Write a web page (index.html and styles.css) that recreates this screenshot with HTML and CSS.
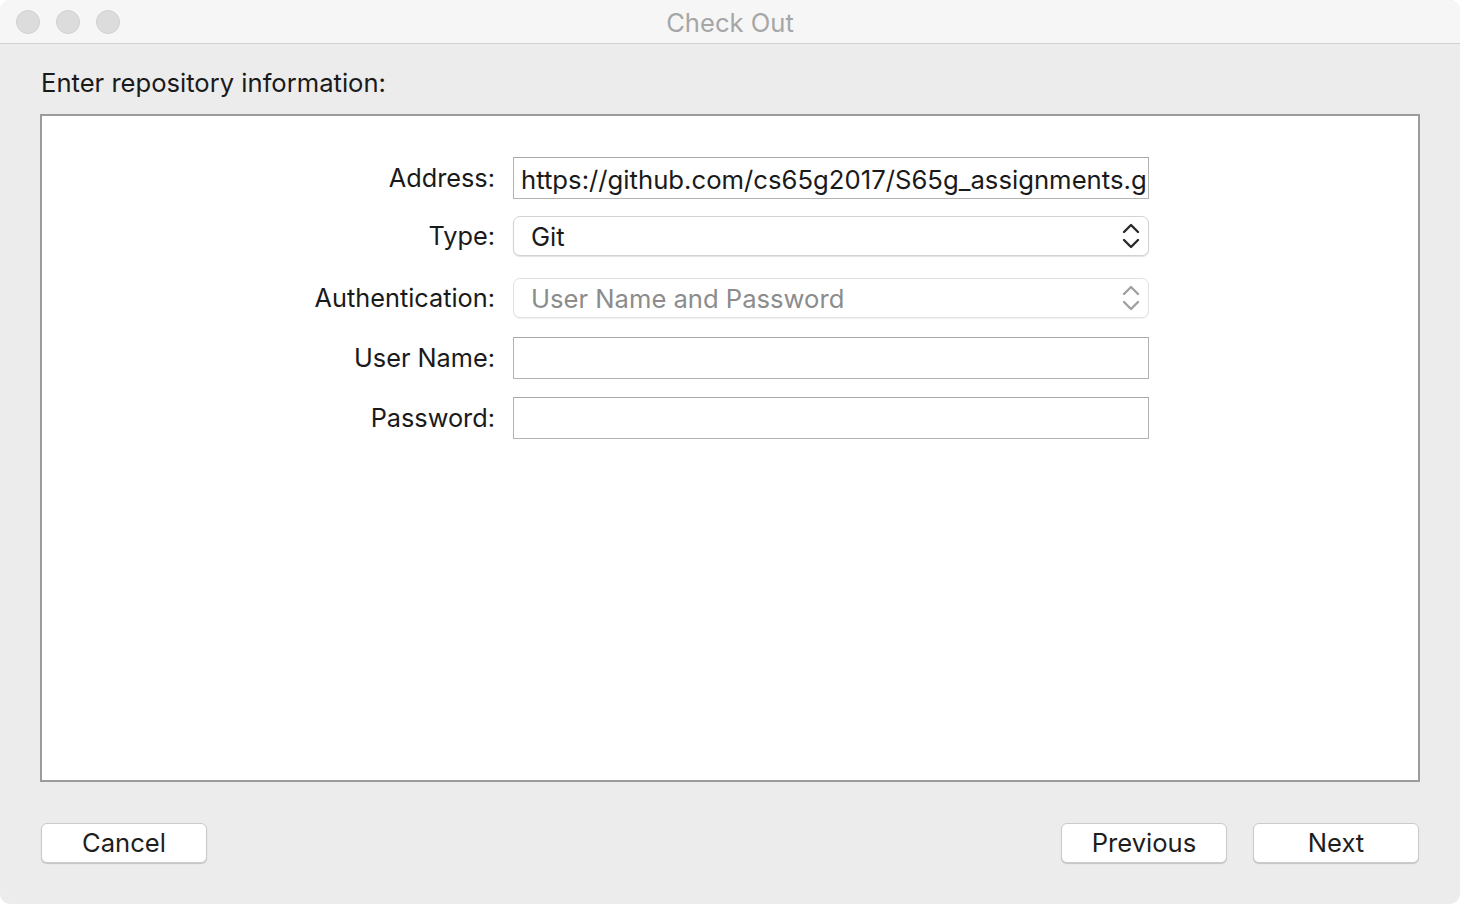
FILE: index.html
```html
<!DOCTYPE html>
<html>
<head>
<meta charset="utf-8">
<link rel="stylesheet" href="styles.css">
</head>
<body>
<div class="window">
  <div class="titlebar">
    <div class="lights">
      <span class="light"></span>
      <span class="light"></span>
      <span class="light"></span>
    </div>
    <div class="title">Check Out</div>
  </div>
  <div class="content">
    <div class="heading">Enter repository information:</div>
    <div class="panel">
      <div class="form">
        <div class="row row-address">
          <label class="label">Address:</label>
          <div class="field text-field">https://github.com/cs65g2017/S65g_assignments.g</div>
        </div>
        <div class="row row-type">
          <label class="label">Type:</label>
          <div class="field popup">
            <span class="popup-text">Git</span>
            <svg class="chev" width="18" height="28" viewBox="0 0 18 28"><path d="M2 10 L9 3 L16 10" fill="none" stroke="#2b2b2b" stroke-width="2.4" stroke-linecap="round" stroke-linejoin="round"/><path d="M2 18 L9 25 L16 18" fill="none" stroke="#2b2b2b" stroke-width="2.4" stroke-linecap="round" stroke-linejoin="round"/></svg>
          </div>
        </div>
        <div class="row row-auth">
          <label class="label">Authentication:</label>
          <div class="field popup disabled">
            <span class="popup-text">User Name and Password</span>
            <svg class="chev" width="18" height="28" viewBox="0 0 18 28"><path d="M2 10 L9 3 L16 10" fill="none" stroke="#a0a0a0" stroke-width="2.4" stroke-linecap="round" stroke-linejoin="round"/><path d="M2 18 L9 25 L16 18" fill="none" stroke="#a0a0a0" stroke-width="2.4" stroke-linecap="round" stroke-linejoin="round"/></svg>
          </div>
        </div>
        <div class="row row-user">
          <label class="label">User Name:</label>
          <div class="field text-field"></div>
        </div>
        <div class="row row-pass">
          <label class="label">Password:</label>
          <div class="field text-field"></div>
        </div>
      </div>
    </div>
    <div class="buttons">
      <button class="btn">Cancel</button>
      <div class="right-buttons">
        <button class="btn">Previous</button>
        <button class="btn">Next</button>
      </div>
    </div>
  </div>
</div>
</body>
</html>
```

FILE: styles.css
```css
* { box-sizing: border-box; }
html, body {
  margin: 0;
  padding: 0;
  background: #ffffff;
}
body {
  font-family: Inter, "Liberation Sans", Arial, sans-serif;
  color: #1e1e1e;
}
.window {
  width: 1460px;
  height: 904px;
  border-radius: 10px;
  overflow: hidden;
  background: #ececec;
  display: flex;
  flex-direction: column;
}
.titlebar {
  height: 44px;
  background: #f6f6f6;
  border-bottom: 1px solid #d1d1d1;
  display: flex;
  align-items: center;
  position: relative;
}
.lights {
  display: flex;
  gap: 16px;
  padding-left: 16px;
}
.light {
  width: 24px;
  height: 24px;
  border-radius: 50%;
  background: #dcdcdc;
  border: 1px solid #d0d0d0;
}
.title {
  position: absolute;
  left: 0;
  right: 0;
  top: 1px;
  height: 43px;
  line-height: 44px;
  text-align: center;
  font-size: 25.6px;
  color: #a6a6a6;
}
.content {
  flex: 1;
  padding: 0 40px;
  display: flex;
  flex-direction: column;
}
.heading {
  font-size: 25.6px;
  line-height: 32px;
  margin-top: 23px;
  margin-bottom: -1px;
  padding-left: 1px;
  color: #1a1a1a;
}
.panel {
  margin-top: 16px;
  height: 668px;
  background: #ffffff;
  border: 2px solid #9b9b9b;
}
.form {
  padding-top: 41px;
  display: flex;
  flex-direction: column;
}
.row {
  display: flex;
  align-items: center;
}
.label {
  width: 453px;
  text-align: right;
  font-size: 25.3px;
  color: #1a1a1a;
  padding-bottom: 2px;
}
.field {
  margin-left: 18px;
  width: 636px;
  background: #fff;
}
.text-field {
  height: 42px;
  border: 1px solid #b3b3b3;
  border-top-color: #a9a9a9;
  font-size: 25.7px;
  line-height: 38px;
  padding-top: 3px;
  padding-left: 7px;
  white-space: nowrap;
  overflow: hidden;
  color: #1a1a1a;
}
.popup {
  height: 40px;
  border: 1px solid #d3d3d3;
  border-radius: 7px;
  box-shadow: 0 1px 1px rgba(0,0,0,0.12);
  display: flex;
  align-items: center;
  justify-content: space-between;
  padding-left: 17px;
  padding-right: 8px;
  font-size: 25.6px;
  color: #1a1a1a;
}
.popup-text {
  padding-top: 0;
}
.popup.disabled {
  color: #8c8c8c;
  border-color: #e2e2e2;
  box-shadow: 0 1px 1px rgba(0,0,0,0.06);
}
.row-type { margin-top: 17px; }
.row-auth { margin-top: 22px; }
.row-user { margin-top: 19px; }
.row-pass { margin-top: 18px; }
.buttons {
  margin-top: 41px;
  display: flex;
  justify-content: space-between;
  padding-left: 1px;
  padding-right: 1px;
}
.right-buttons {
  display: flex;
  gap: 26px;
}
.btn {
  width: 166px;
  height: 40px;
  background: #ffffff;
  border: 1px solid #cbcbcb;
  border-radius: 6px;
  box-shadow: 0 1px 1px rgba(0,0,0,0.18);
  font-family: Inter, "Liberation Sans", Arial, sans-serif;
  font-size: 25.6px;
  color: #1e1e1e;
  padding: 0 0 2px 0;
}
```
